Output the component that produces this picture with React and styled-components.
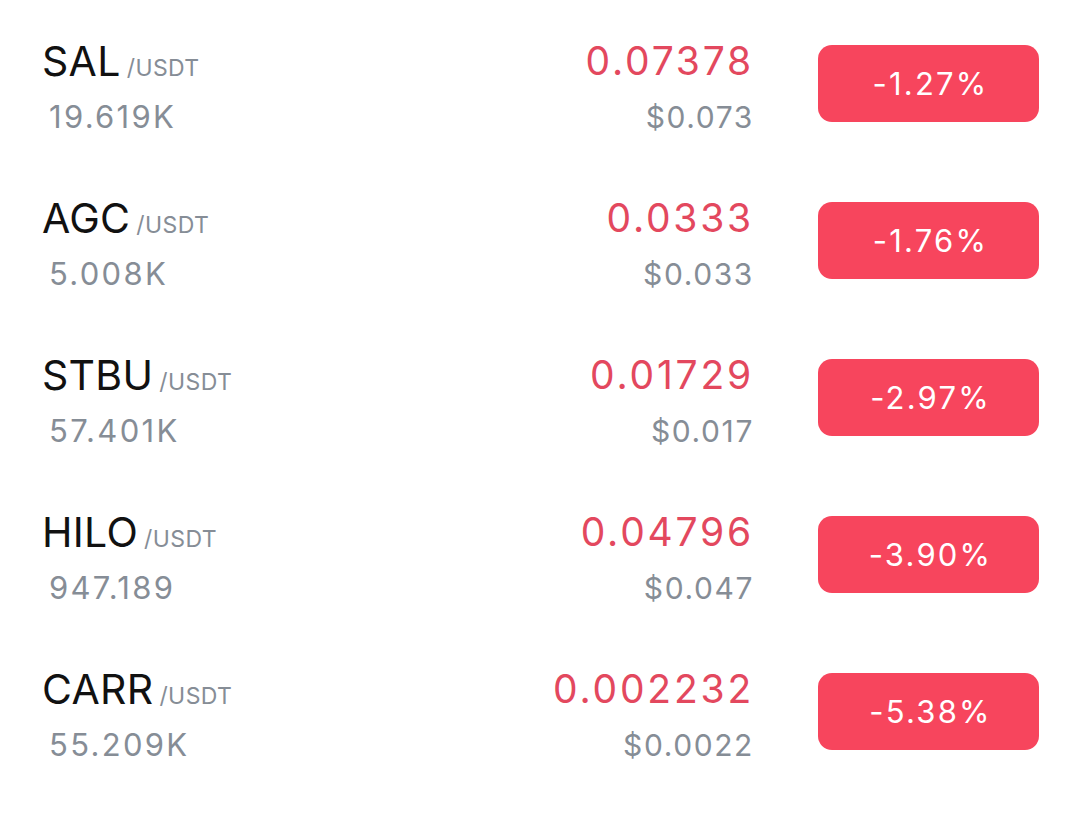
import React from "react";
import styled, {createGlobalStyle} from "styled-components";

const Global = createGlobalStyle`
  body {
    margin: 0;
    background: #ffffff;
    font-family: "Inter", "Roboto", sans-serif;
  }
`

const List = styled.div`
  display: flex;
  flex-direction: column;
  padding: 35px 41px 0 42px;
`

const Row = styled.div`
  display: flex;
  align-items: flex-start;
  height: 157px;
`

const Pair = styled.div`
  flex: 1;
  display: flex;
  flex-direction: column;
`

const PairLine = styled.div`
  display: flex;
  align-items: baseline;
  height: 52px;
`

const Base = styled.span`
  font-size: 41px;
  line-height: 52px;
  color: #111111;
  letter-spacing: 0.3px;
`

const Quote = styled.span`
  font-size: 23px;
  color: #868d96;
  margin-left: 6px;
  letter-spacing: 0.4px;
`

const Volume = styled.div`
  font-size: 31px;
  line-height: 40px;
  margin-top: 10px;
  color: #868d96;
  margin-left: 7px;
  letter-spacing: 2.3px;
`

const PriceCol = styled.div`
  display: flex;
  flex-direction: column;
  align-items: flex-end;
`

const Price = styled.div`
  font-size: 39px;
  line-height: 52px;
  color: #e3485e;
  letter-spacing: 2.8px;
`

const Usd = styled.div`
  font-size: 30px;
  line-height: 40px;
  margin-top: 10px;
  color: #868d96;
  letter-spacing: 1.6px;
`

const Change = styled.div`
  width: 221px;
  height: 77px;
  margin-left: 64px;
  margin-top: 10px;
  border-radius: 14px;
  background: #f7455d;
  color: #ffffff;
  font-size: 31px;
  letter-spacing: 2.2px;
  display: flex;
  align-items: center;
  justify-content: center;
  padding-left: 4px;
  box-sizing: border-box;
`

const coins = [
  {base: "SAL", vol: "19.619K", price: "0.07378", usd: "$0.073", change: "-1.27%"},
  {base: "AGC", vol: "5.008K", price: "0.0333", usd: "$0.033", change: "-1.76%"},
  {base: "STBU", vol: "57.401K", price: "0.01729", usd: "$0.017", change: "-2.97%"},
  {base: "HILO", vol: "947.189", price: "0.04796", usd: "$0.047", change: "-3.90%"},
  {base: "CARR", vol: "55.209K", price: "0.002232", usd: "$0.0022", change: "-5.38%"},
];

function App() {
  return (
    <>
      <Global />
      <List>
        {coins.map(c => (
          <Row key={c.base}>
            <Pair>
              <PairLine>
                <Base>{c.base}</Base>
                <Quote>/USDT</Quote>
              </PairLine>
              <Volume>{c.vol}</Volume>
            </Pair>
            <PriceCol>
              <Price>{c.price}</Price>
              <Usd>{c.usd}</Usd>
            </PriceCol>
            <Change>{c.change}</Change>
          </Row>
        ))}
      </List>
    </>
  )
}

export default App;
